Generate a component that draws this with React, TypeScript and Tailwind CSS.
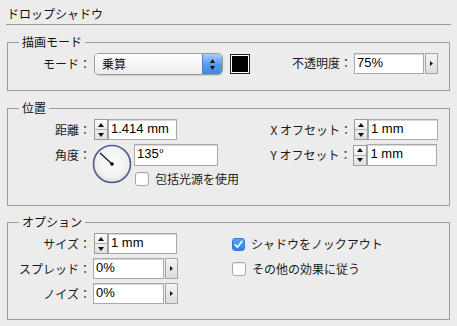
import React from 'react';

const JP = "font-['Noto_Sans_CJK_JP',sans-serif]";
const NUM = "font-['Liberation_Sans','Noto_Sans_CJK_JP',sans-serif]";

function Panel({ title, className, children }: { title: string; className: string; children: React.ReactNode }) {
  return (
    <div className={`relative mx-[7px] border border-[#9c9c9c] ${className}`}>
      <span className="absolute -top-[9px] left-[11px] bg-[#ececec] px-[3px] text-[12px] leading-[16px] text-[#111]">
        {title}
      </span>
      {children}
    </div>
  );
}

function Label({ children, className = '' }: { children: React.ReactNode; className?: string }) {
  return <span className={`text-right text-[12px] text-[#1a1a1a] ${className}`}>{children}</span>;
}

function Stepper() {
  return (
    <div className="flex h-[21px] w-[14px] flex-col border border-[#9c9c9c] bg-gradient-to-b from-[#fbfbfb] to-[#e0e0e0]">
      <div className="flex flex-1 items-center justify-center border-b border-[#b0b0b0]">
        <svg width="6" height="4" viewBox="0 0 6 4"><path d="M3 0 L6 4 L0 4 Z" fill="#111" /></svg>
      </div>
      <div className="flex flex-1 items-center justify-center">
        <svg width="6" height="4" viewBox="0 0 6 4"><path d="M0 0 L6 0 L3 4 Z" fill="#111" /></svg>
      </div>
    </div>
  );
}

function Field({ value, className }: { value: string; className: string }) {
  return (
    <div
      className={`border border-[#a9a9a9] bg-white pl-[2px] pt-[1px] text-[13px] leading-[16px] text-black shadow-[inset_0_1px_0_#d8d8d8] ${NUM} ${className}`}
    >
      {value}
    </div>
  );
}

function ArrowButton() {
  return (
    <div className="ml-[1px] flex h-[21px] w-[13px] items-center justify-center border border-[#a5a5a5] bg-gradient-to-b from-[#f4f4f4] to-[#dcdcdc]">
      <svg width="3" height="5" viewBox="0 0 3 5"><path d="M0 0 L3 2.5 L0 5 Z" fill="#111" /></svg>
    </div>
  );
}

function Checkbox({ checked, label }: { checked: boolean; label: string }) {
  return (
    <div className="flex h-[14px] items-center">
      {checked ? (
        <div className="flex h-[13px] w-[13px] items-center justify-center rounded-[3px] border border-[#2f78d8] bg-gradient-to-b from-[#5aa6f7] to-[#2f80e8]">
          <svg width="11" height="11" viewBox="0 0 11 11">
            <path d="M2.2 5.8 L4.4 8.2 L8.8 2.4" fill="none" stroke="white" strokeWidth="1.6" strokeLinecap="round" strokeLinejoin="round" />
          </svg>
        </div>
      ) : (
        <div className="h-[14px] w-[14px] rounded-[3px] border border-[#a8a8a8] bg-white shadow-[inset_0_1px_0_#eee]" />
      )}
      <span className="ml-[6px] text-[12px] leading-[16px] text-[#1a1a1a]">{label}</span>
    </div>
  );
}

function Dial() {
  return (
    <svg width="40" height="40" viewBox="0 0 40 40">
      <defs>
        <radialGradient id="dialFill" cx="50%" cy="45%" r="60%">
          <stop offset="0" stopColor="#fdfdfd" />
          <stop offset="0.7" stopColor="#f0f0f0" />
          <stop offset="1" stopColor="#d6d6d6" />
        </radialGradient>
      </defs>
      <circle cx="20" cy="20" r="18.5" fill="url(#dialFill)" stroke="#4d5d8d" strokeWidth="1.6" />
      <line x1="20" y1="20" x2="8" y2="9" stroke="#111" strokeWidth="1.2" />
      <circle cx="20" cy="20" r="1.8" fill="#000" />
    </svg>
  );
}

export default function App() {
  return (
    <div className={`h-[326px] w-[457px] overflow-hidden bg-[#ececec] text-[#111] ${JP}`}>
      <div className="pl-[7px] pt-[6px] text-[12px] leading-[16px]">ドロップシャドウ</div>
      <div className="mx-[6px] mt-[2px] h-px bg-[#9a9a9a]" />

      {/* 描画モード */}
      <Panel title="描画モード" className="mt-[17px] h-[49px]">
        <div className="flex items-center pr-[11px] pt-[10px]">
          <Label className="w-[83px]">モード：</Label>
          <div className="ml-[3px] flex h-[22px] w-[129px] overflow-hidden rounded-[5px] border border-[#9a9a9a] shadow-[0_1px_1px_rgba(0,0,0,0.12)]">
            <div className="flex-1 bg-gradient-to-b from-white to-[#ececec] pl-[7px] text-[12px] leading-[20px]">乗算</div>
            <div className="flex w-[20px] flex-col items-center justify-center gap-[3px] border-l border-[#4d86d6] bg-gradient-to-b from-[#a9d0f8] via-[#5b9ced] to-[#3f88e6]">
              <svg width="5" height="4" viewBox="0 0 5 4"><path d="M2.5 0 L5 4 L0 4 Z" fill="#111" /></svg>
              <svg width="5" height="4" viewBox="0 0 5 4"><path d="M0 0 L5 0 L2.5 4 Z" fill="#111" /></svg>
            </div>
          </div>
          <div className="ml-[7px] h-[20px] w-[20px] border border-[#222] bg-white p-[1px]">
            <div className="h-full w-full bg-black" />
          </div>
          <div className="-mt-[2px] ml-auto flex items-center">
            <Label>不透明度：</Label>
            <Field value="75%" className="ml-[2px] h-[21px] w-[70px]" />
            <ArrowButton />
          </div>
        </div>
      </Panel>

      {/* 位置 */}
      <Panel title="位置" className="mt-[17px] h-[98px]">
        <div className="flex justify-between pr-[11px] pt-[10px]">
          <div className="flex flex-col gap-[4px]">
            <div className="flex items-center">
              <Label className="w-[83px]">距離：</Label>
              <div className="ml-[3px]"><Stepper /></div>
              <Field value="1.414 mm" className="h-[21px] w-[69px]" />
            </div>
            <div className="flex items-start">
              <Label className="mt-[3px] w-[83px] leading-[16px]">角度：</Label>
              <div className="ml-[1px]"><Dial /></div>
              <div className="ml-[2px] flex flex-col">
                <Field value="135°" className="h-[22px] w-[84px]" />
                <div className="ml-[1px] mt-[6px]">
                  <Checkbox checked={false} label="包括光源を使用" />
                </div>
              </div>
            </div>
          </div>
          <div className="flex flex-col gap-[4px]">
            <div className="flex items-center">
              <Label>X オフセット：</Label>
              <div className="ml-[2px]"><Stepper /></div>
              <Field value="1 mm" className="h-[21px] w-[70px]" />
            </div>
            <div className="flex items-center">
              <Label>Y オフセット：</Label>
              <div className="ml-[2px]"><Stepper /></div>
              <Field value="1 mm" className="h-[22px] w-[70px]" />
            </div>
          </div>
        </div>
      </Panel>

      {/* オプション */}
      <Panel title="オプション" className="mt-[16px] h-[98px]">
        <div className="flex pt-[10px]">
          <div className="flex w-[224px] flex-col gap-[4px]">
            <div className="flex items-center">
              <Label className="w-[83px]">サイズ：</Label>
              <div className="ml-[3px]"><Stepper /></div>
              <Field value="1 mm" className="h-[21px] w-[69px]" />
            </div>
            <div className="flex items-center">
              <Label className="w-[83px]">スプレッド：</Label>
              <Field value="0%" className="ml-[2px] h-[21px] w-[71px]" />
              <ArrowButton />
            </div>
            <div className="flex items-center">
              <Label className="w-[83px]">ノイズ：</Label>
              <Field value="0%" className="ml-[2px] h-[21px] w-[71px]" />
              <ArrowButton />
            </div>
          </div>
          <div className="flex flex-col gap-[11px] pt-[4px]">
            <Checkbox checked label="シャドウをノックアウト" />
            <Checkbox checked={false} label="その他の効果に従う" />
          </div>
        </div>
      </Panel>
    </div>
  );
}
